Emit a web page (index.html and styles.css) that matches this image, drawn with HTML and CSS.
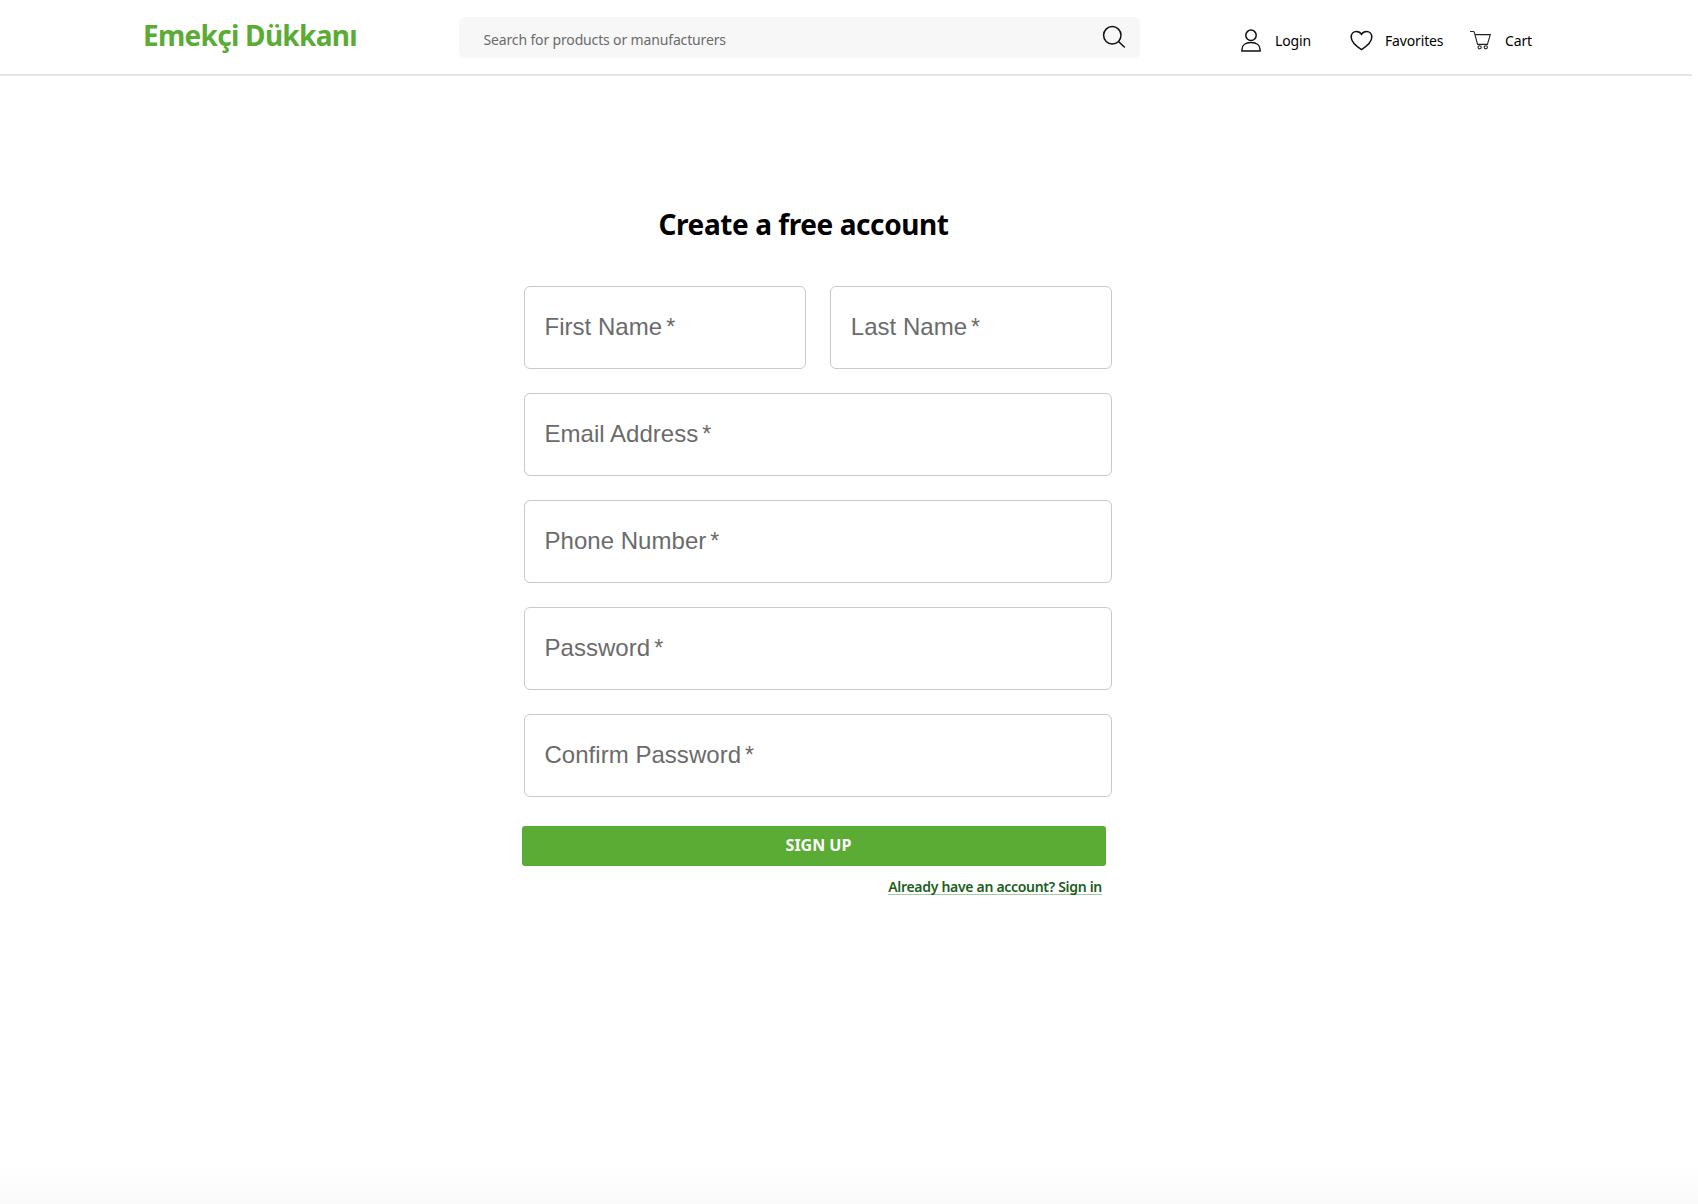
FILE: index.html
```html
<!DOCTYPE html>
<html lang="en">
<head>
<meta charset="utf-8">
<title>Emekçi Dükkanı</title>
<link rel="stylesheet" href="styles.css">
</head>
<body>
<header class="header">
  <a class="logo">Emekçi Dükkanı</a>
  <div class="search">
    <span class="search-text">Search for products or manufacturers</span>
    <svg class="search-icon" width="24" height="24" viewBox="0 0 24 24"><circle cx="10.3" cy="10.3" r="8.7"/><path d="M16.5 16.5l6.3 6"/></svg>
  </div>
  <nav class="nav">
    <a class="nav-item login"><svg width="22" height="24" viewBox="0 0 22 24"><circle cx="11" cy="6.3" r="5.2"/><path d="M1.900 21.900v-1.200c0-4.200 3.300-7.100 9.100-7.100s9.100 2.900 9.100 7.100v1.200z"/></svg><span>Login</span></a>
    <a class="nav-item favorites"><svg width="24" height="24" viewBox="0 0 24 24"><path d="M12.500 20.600C7.500 17.300 2.200 13.300 2.200 8.200c0-3.300 2.300-5.700 5.200-5.700 2.100 0 3.900.9 5.100 2.900 1.200-2 3-2.900 5.100-2.900 2.900 0 5.200 2.400 5.200 5.700 0 5.100-5.300 9.100-10.300 12.400z"/></svg><span>Favorites</span></a>
    <a class="nav-item cart"><svg width="24" height="24" viewBox="0 0 24 24"><path d="M1 2.500h3.300q.8 0 1 .8l3.300 12.100h9.800l2.900-9.800H6"/><circle cx="10.600" cy="18.300" r="1.600"/><circle cx="16.800" cy="18.300" r="1.600"/></svg><span>Cart</span></a>
  </nav>
</header>
<main class="signup">
  <h1 class="title">Create a free account</h1>
  <form class="form">
    <div class="field"><label>First Name<i>*</i></label></div>
    <div class="field"><label>Last Name<i>*</i></label></div>
    <div class="field wide"><label>Email Address<i>*</i></label></div>
    <div class="field wide"><label>Phone Number<i>*</i></label></div>
    <div class="field wide"><label>Password<i>*</i></label></div>
    <div class="field wide"><label>Confirm Password<i>*</i></label></div>
  </form>
  <button class="submit">SIGN UP</button>
  <div class="signin"><a>Already have an account? Sign in</a></div>
</main>
</body>
</html>
```
FILE: styles.css
```css
* { box-sizing: border-box; }
body {
  margin: 0;
  min-height: 1204px;
  background: linear-gradient(#fff 1160px, #fafafa 1204px);
  font-family: "Noto Sans", sans-serif;
  color: #000;
}
.header {
  display: flex;
  align-items: flex-start;
  width: 1692px;
  height: 76px;
  padding-left: 143px;
  border-bottom: 2px solid #e5e5e5;
}
.logo {
  width: 316px;
  padding-top: 15px;
  font-size: 28px;
  line-height: 40px;
  font-weight: 700;
  letter-spacing: -.72px;
  color: #5aac34;
}
.search {
  display: flex;
  justify-content: space-between;
  width: 681px;
  height: 41px;
  margin-top: 17px;
  padding: 8px 14px 0 24.5px;
  border-radius: 6px;
  background: #f7f7f7;
}
.search-text { font-size: 14px; line-height: 29px; letter-spacing: -.15px; color: #6b6b6b; }
svg { flex: none; fill: none; stroke: #111; stroke-width: 1.5; }
.nav { display: flex; margin-top: 29px; }
.nav-item { display: flex; font-size: 14px; line-height: 23px; letter-spacing: -.15px; }
.login { margin-left: 100px; width: 109px; gap: 13px; }
.favorites { width: 120px; gap: 12px; }
.cart { gap: 12px; }
.cart svg { stroke: #222; stroke-width: 1.1; }
.signup { width: 588.5px; margin: 128px 0 0 523.5px; }
.title {
  margin: 0 0 42px 135px;
  font-size: 28px;
  line-height: 40px;
  font-weight: 700;
  letter-spacing: -.42px;
}
.form { display: grid; grid-template-columns: 1fr 1fr; gap: 24px; }
.field {
  display: flex;
  height: 83px;
  padding: 0 20px 1px;
  align-items: center;
  border: 1.5px solid #c9c9c9;
  border-radius: 6px;
}
.wide { grid-column: span 2; }
label {
  font: 24px/36px "Liberation Sans", Arial, sans-serif;
  letter-spacing: .03px;
  color: #6b6b6b;
}
label i { margin-left: 4px; font-size: 23px; font-style: normal; }
.submit {
  display: block;
  width: 584px;
  height: 40px;
  margin: 29px 0 0 -2px;
  padding: 0 0 3px 10px;
  border: 0;
  border-radius: 3px;
  background: #5aac34;
  color: #fff;
  font: 700 16px/36px "Noto Sans", sans-serif;
}
.signin { padding: 9px 10px 0 0; text-align: right; font-size: 14px; line-height: 24px; }
.signin a {
  display: inline-block;
  height: 20px;
  border-bottom: 1px solid #a5cba6;
  font-weight: 600;
  letter-spacing: -.3px;
  color: #1b5e20;
}
```
